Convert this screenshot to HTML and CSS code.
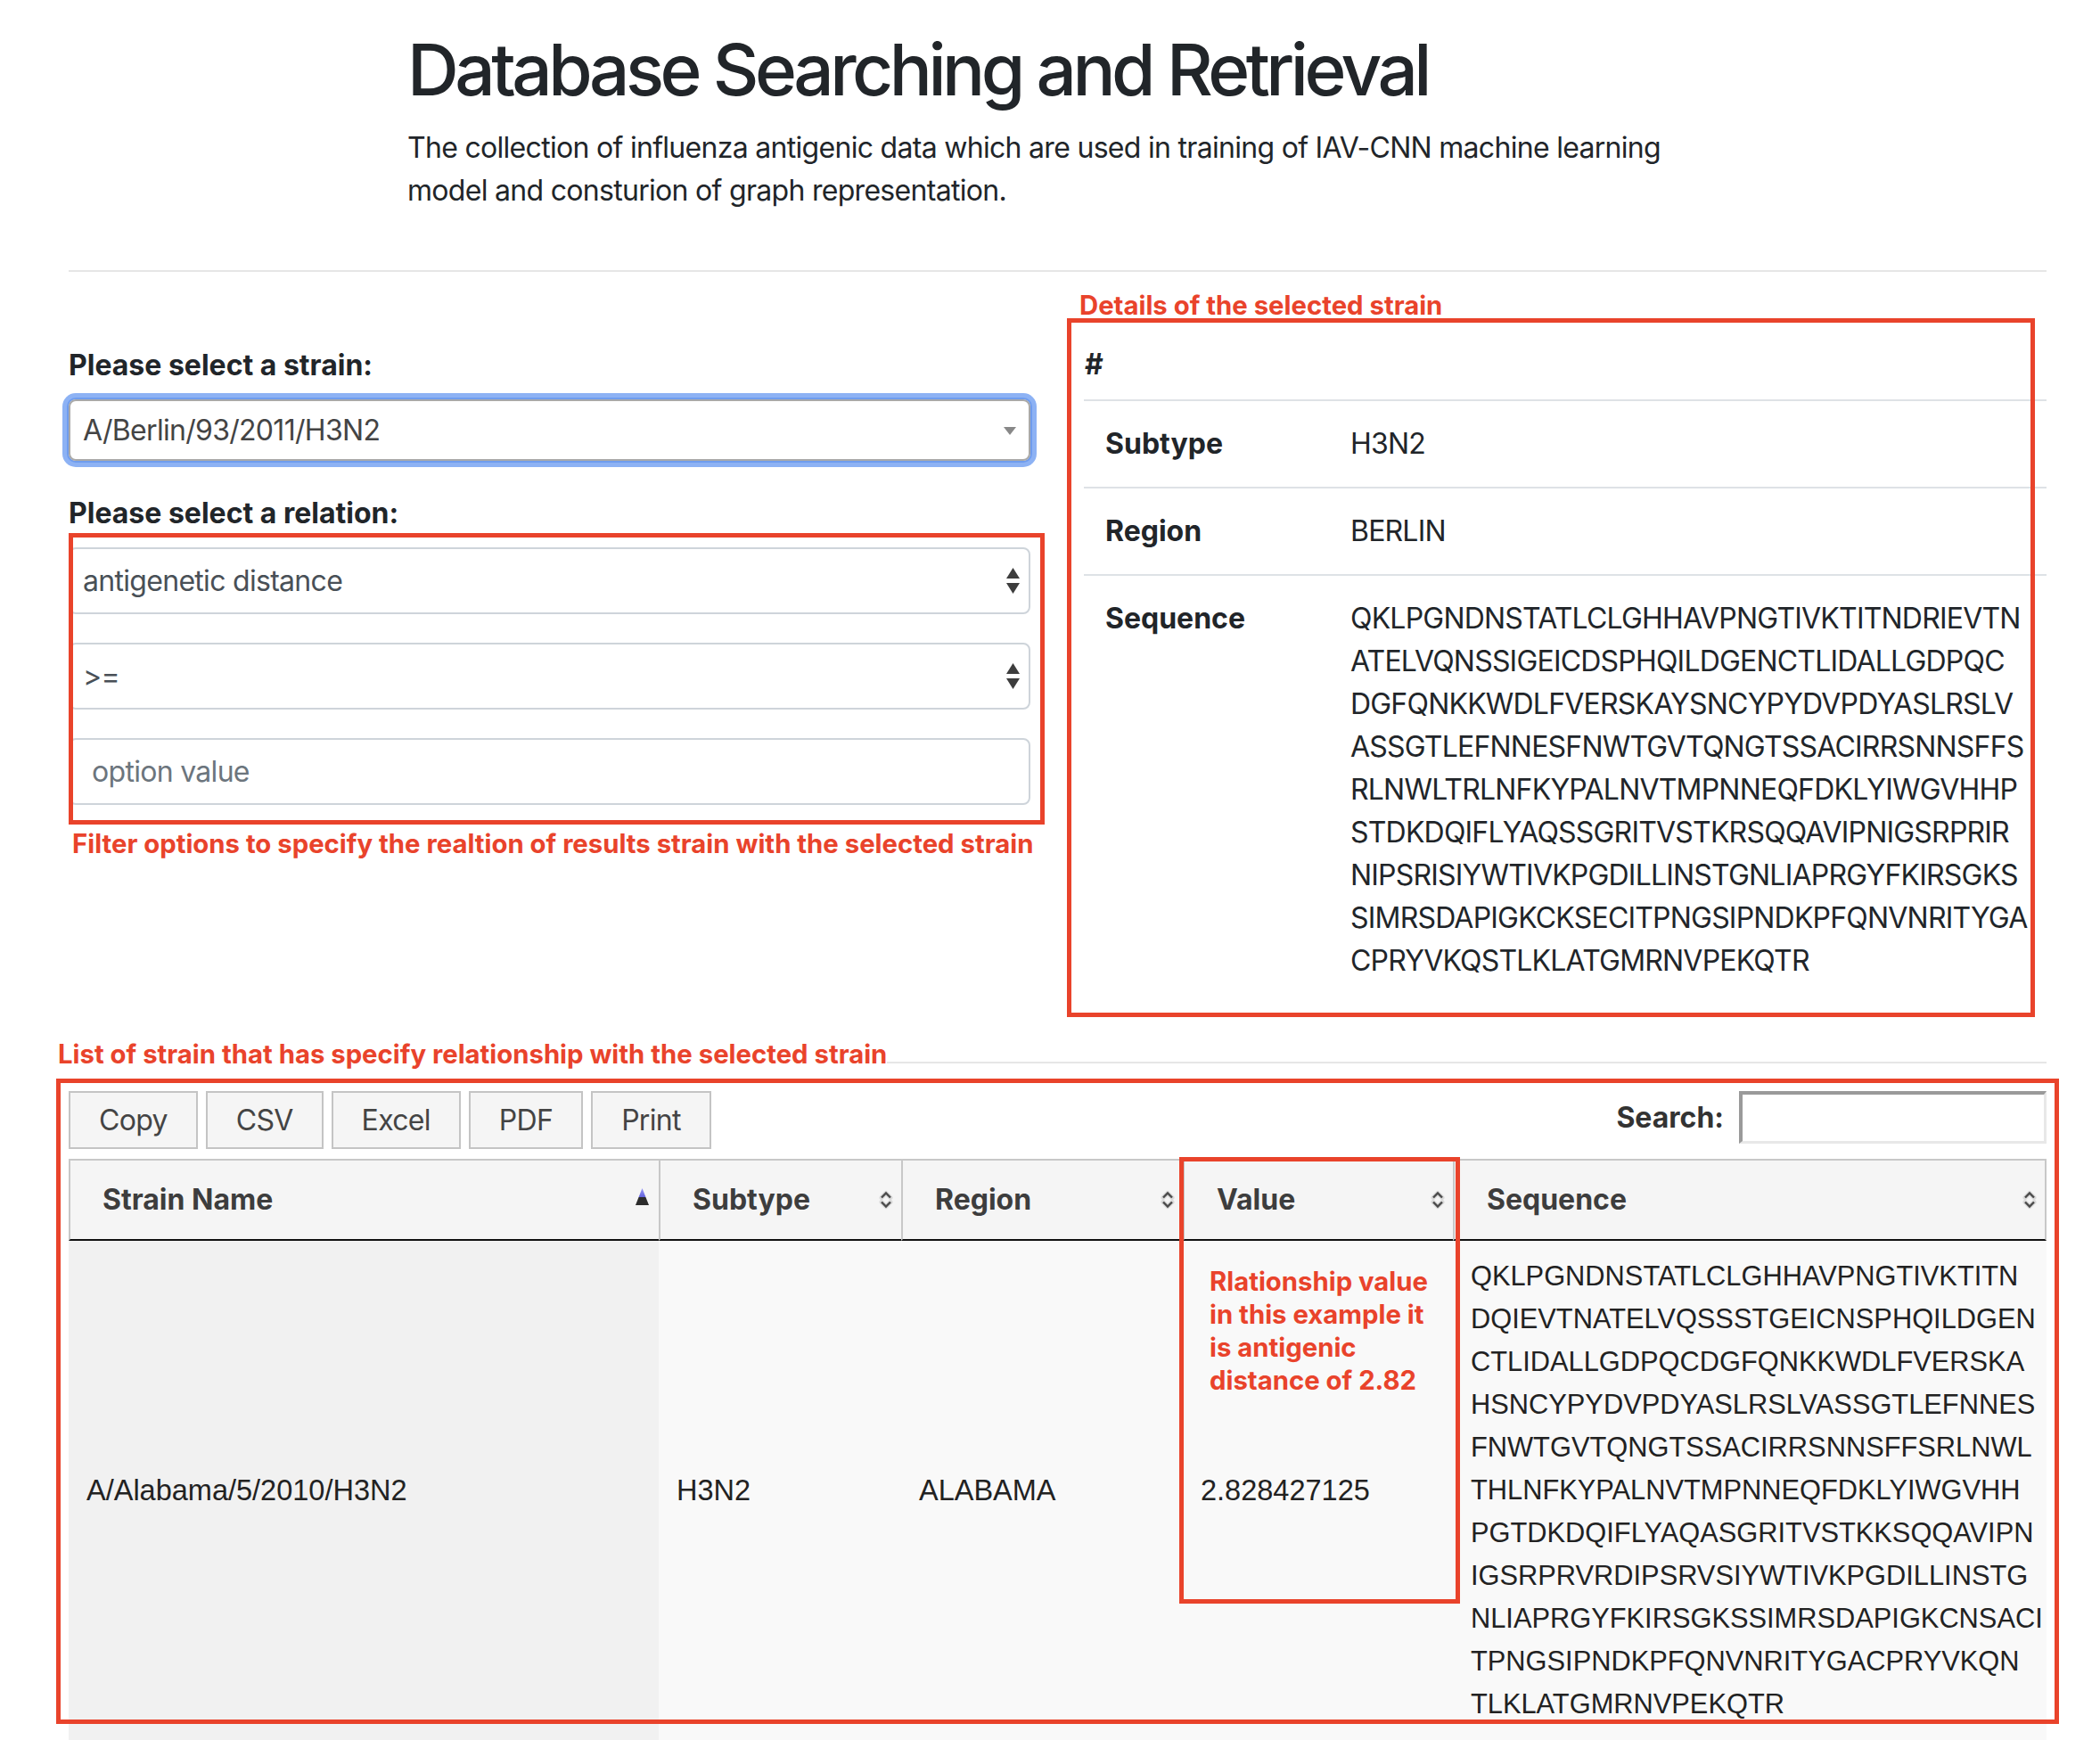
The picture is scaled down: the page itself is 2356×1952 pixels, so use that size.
FILE: index.html
```html
<!DOCTYPE html>
<html lang="en">
<head>
<meta charset="utf-8">
<title>Database Searching and Retrieval</title>
<link rel="stylesheet" href="styles.css">
</head>
<body>
<main class="page">
  <header class="intro">
    <h1 class="intro-title">Database Searching and Retrieval</h1>
    <p class="intro-lead">The collection of influenza antigenic data which are used in training of IAV-CNN machine learning model and consturion of graph representation.</p>
  </header>

  <hr class="rule rule-top">

  <div class="split">
    <section class="query">
      <label class="field-label">Please select a strain:</label>
      <div class="strain-select">
        <span>A/Berlin/93/2011/H3N2</span>
        <span class="strain-arrow"></span>
      </div>

      <label class="field-label">Please select a relation:</label>
      <div class="relation">
        <div class="native-select">
          <span>antigenetic distance</span>
          <svg class="updown" width="15" height="29" viewBox="0 0 15 29"><polygon points="7.5,0 15,12 0,12"/><polygon points="0,17 15,17 7.5,29"/></svg>
        </div>
        <div class="native-select">
          <span>&gt;=</span>
          <svg class="updown" width="15" height="29" viewBox="0 0 15 29"><polygon points="7.5,0 15,12 0,12"/><polygon points="0,17 15,17 7.5,29"/></svg>
        </div>
        <input class="text-input" type="text" placeholder="option value">
        <div class="note-box relation-box"></div>
      </div>
      <p class="note filter-note">Filter options to specify the realtion of results strain with the selected strain</p>
    </section>

    <section class="details">
      <p class="note details-note">Details of the selected strain</p>
      <table class="detail-table">
        <colgroup>
          <col class="detail-key-col">
          <col>
        </colgroup>
        <thead>
          <tr><th class="detail-hash" colspan="2">#</th></tr>
        </thead>
        <tbody>
          <tr><th>Subtype</th><td>H3N2</td></tr>
          <tr><th>Region</th><td>BERLIN</td></tr>
          <tr>
            <th>Sequence</th>
            <td>QKLPGNDNSTATLCLGHHAVPNGTIVKTITNDRIEVTN<br>ATELVQNSSIGEICDSPHQILDGENCTLIDALLGDPQC<br>DGFQNKKWDLFVERSKAYSNCYPYDVPDYASLRSLV<br>ASSGTLEFNNESFNWTGVTQNGTSSACIRRSNNSFFS<br>RLNWLTRLNFKYPALNVTMPNNEQFDKLYIWGVHHP<br>STDKDQIFLYAQSSGRITVSTKRSQQAVIPNIGSRPRIR<br>NIPSRISIYWTIVKPGDILLINSTGNLIAPRGYFKIRSGKS<br>SIMRSDAPIGKCKSECITPNGSIPNDKPFQNVNRITYGA<br>CPRYVKQSTLKLATGMRNVPEKQTR</td>
          </tr>
        </tbody>
      </table>
      <div class="note-box details-box"></div>
    </section>
  </div>

  <div class="results-head">
    <hr class="rule">
    <p class="note results-note">List of strain that has specify relationship with the selected strain</p>
  </div>

  <div class="dt-wrapper">
    <div class="dt-toolbar">
      <div class="dt-buttons">
        <button class="dt-button">Copy</button>
        <button class="dt-button">CSV</button>
        <button class="dt-button">Excel</button>
        <button class="dt-button">PDF</button>
        <button class="dt-button">Print</button>
      </div>
      <label class="dt-search">Search: <input class="dt-search-input" type="search"></label>
    </div>

    <table class="dt">
      <thead>
        <tr>
          <th class="col-name">Strain Name
            <svg class="sort-icon sort-asc" width="17" height="20" viewBox="0 0 17 20"><defs><linearGradient id="ascg" x1="0" y1="0" x2="0" y2="1"><stop offset="0" stop-color="#9a9af8"/><stop offset="0.5" stop-color="#6464dc"/><stop offset="0.52" stop-color="#2c2c2c"/><stop offset="1" stop-color="#2c2c2c"/></linearGradient></defs><polygon points="8.5,0 16,19 1,19" fill="url(#ascg)"/></svg>
          </th>
          <th class="col-subtype">Subtype
            <svg class="sort-icon" width="16" height="24" viewBox="0 0 16 24"><path d="M3 9.5 L8 4.5 L13 9.5 M3 14.5 L8 19.5 L13 14.5" fill="none" stroke="#c8c8c8" stroke-width="5" stroke-linecap="round" stroke-linejoin="round" opacity="0.6"/><path d="M3 9.5 L8 4.5 L13 9.5 M3 14.5 L8 19.5 L13 14.5" fill="none" stroke="#4a4a4a" stroke-width="2.4"/></svg>
          </th>
          <th class="col-region">Region
            <svg class="sort-icon" width="16" height="24" viewBox="0 0 16 24"><path d="M3 9.5 L8 4.5 L13 9.5 M3 14.5 L8 19.5 L13 14.5" fill="none" stroke="#c8c8c8" stroke-width="5" stroke-linecap="round" stroke-linejoin="round" opacity="0.6"/><path d="M3 9.5 L8 4.5 L13 9.5 M3 14.5 L8 19.5 L13 14.5" fill="none" stroke="#4a4a4a" stroke-width="2.4"/></svg>
          </th>
          <th class="col-value">Value
            <svg class="sort-icon" width="16" height="24" viewBox="0 0 16 24"><path d="M3 9.5 L8 4.5 L13 9.5 M3 14.5 L8 19.5 L13 14.5" fill="none" stroke="#c8c8c8" stroke-width="5" stroke-linecap="round" stroke-linejoin="round" opacity="0.6"/><path d="M3 9.5 L8 4.5 L13 9.5 M3 14.5 L8 19.5 L13 14.5" fill="none" stroke="#4a4a4a" stroke-width="2.4"/></svg>
          </th>
          <th class="col-seq">Sequence
            <svg class="sort-icon" width="16" height="24" viewBox="0 0 16 24"><path d="M3 9.5 L8 4.5 L13 9.5 M3 14.5 L8 19.5 L13 14.5" fill="none" stroke="#c8c8c8" stroke-width="5" stroke-linecap="round" stroke-linejoin="round" opacity="0.6"/><path d="M3 9.5 L8 4.5 L13 9.5 M3 14.5 L8 19.5 L13 14.5" fill="none" stroke="#4a4a4a" stroke-width="2.4"/></svg>
          </th>
        </tr>
      </thead>
      <tbody>
        <tr>
          <td class="sorted">A/Alabama/5/2010/H3N2</td>
          <td>H3N2</td>
          <td>ALABAMA</td>
          <td>2.828427125</td>
          <td class="seq-cell">QKLPGNDNSTATLCLGHHAVPNGTIVKTITN<br>DQIEVTNATELVQSSSTGEICNSPHQILDGEN<br>CTLIDALLGDPQCDGFQNKKWDLFVERSKA<br>HSNCYPYDVPDYASLRSLVASSGTLEFNNES<br>FNWTGVTQNGTSSACIRRSNNSFFSRLNWL<br>THLNFKYPALNVTMPNNEQFDKLYIWGVHH<br>PGTDKDQIFLYAQASGRITVSTKKSQQAVIPN<br>IGSRPRVRDIPSRVSIYWTIVKPGDILLINSTG<br>NLIAPRGYFKIRSGKSSIMRSDAPIGKCNSACI<br>TPNGSIPNDKPFQNVNRITYGACPRYVKQN<br>TLKLATGMRNVPEKQTR</td>
        </tr>
      </tbody>
    </table>

    <div class="note-box results-box"></div>
    <div class="note-box value-box"></div>
    <p class="note value-note">Rlationship value<br>in this example it<br>is antigenic<br>distance of 2.82</p>
  </div>
</main>
</body>
</html>
```

FILE: styles.css
```css
* {
  box-sizing: border-box;
}

html {
  overflow: hidden;
}

body {
  margin: 0;
  background: #ffffff;
  color: #212529;
  font-family: Inter, "Noto Sans", sans-serif;
  font-size: 32px;
  line-height: 48px;
  letter-spacing: -0.7px;
}

.page {
  width: 2356px;
  padding: 0 60px 0 77px;
}

/* ---------- intro ---------- */
.intro {
  margin-left: 380px;
  width: 1459px;
  padding-top: 30px;
}

.intro-title {
  margin: 0 0 16px;
  font-size: 80px;
  font-weight: 500;
  line-height: 96px;
  letter-spacing: -4.5px;
}

.intro-lead {
  margin: 0;
  font-size: 32px;
  line-height: 48px;
}

.rule {
  border: 0;
  border-top: 2px solid #e6e6e6;
  margin: 0;
  height: 0;
}

.rule-top {
  margin-top: 65px;
}

/* ---------- annotations ---------- */
.note {
  margin: 0;
  color: #e9432b;
  font-weight: 700;
  font-size: 29.3px;
  line-height: 36px;
  letter-spacing: 0;
  white-space: nowrap;
}

.note-box {
  position: absolute;
  border: 5px solid #e9432b;
  pointer-events: none;
}

/* ---------- split area ---------- */
.split {
  display: grid;
  grid-template-columns: 1079px 1080px;
  column-gap: 60px;
  margin-top: 56px;
}

.query {
  padding-top: 25px;
}

.field-label {
  display: block;
  font-weight: 700;
  letter-spacing: 0;
  margin-bottom: 14px;
}

.strain-select {
  position: relative;
  display: flex;
  align-items: center;
  height: 69px;
  padding-left: 14px;
  margin-bottom: 35px;
  border: 2px solid #a9a9a9;
  border-radius: 8px;
  color: #444444;
  box-shadow: 0 0 0 2px #6f9cee, 0 0 0 7px #8db2f4;
}

.strain-arrow {
  position: absolute;
  right: 14px;
  top: 50%;
  margin-top: -4px;
  width: 0;
  height: 0;
  border-top: 9px solid #888888;
  border-left: 7px solid transparent;
  border-right: 7px solid transparent;
}

.relation {
  position: relative;
  display: flex;
  flex-direction: column;
  gap: 32px;
}

.native-select {
  display: flex;
  align-items: center;
  justify-content: space-between;
  height: 75px;
  padding: 0 10px 0 14px;
  border: 2px solid #ced4da;
  border-radius: 8px;
  color: #495057;
  background: #ffffff;
}

.updown {
  fill: #3d3d3d;
}

.text-input {
  display: block;
  width: 100%;
  height: 75px;
  padding: 0 24px;
  border: 2px solid #ced4da;
  border-radius: 8px;
  font: inherit;
  letter-spacing: -0.7px;
  color: #495057;
  background: #ffffff;
}

.text-input::placeholder {
  color: #6c757d;
}

.relation-box {
  top: -16px;
  left: 0;
  right: -16px;
  height: 327px;
}

.filter-note {
  margin-top: 26px;
  margin-left: 4px;
}

/* ---------- details ---------- */
.details {
  position: relative;
}

.details-note {
  position: absolute;
  left: -5px;
  top: -36px;
}

.details-box {
  top: -4px;
  left: -19px;
  width: 1086px;
  height: 784px;
}

.detail-table {
  width: 100%;
  table-layout: fixed;
  border-collapse: collapse;
}

.detail-key-col {
  width: 275px;
}

.detail-table th,
.detail-table td {
  text-align: left;
  vertical-align: top;
  padding: 24px;
  line-height: 48px;
  white-space: nowrap;
}

.detail-table td {
  letter-spacing: -0.8px;
}

.detail-table th {
  font-weight: 700;
  letter-spacing: 0;
}

.detail-table thead th.detail-hash {
  padding: 24px 0 15px 1px;
}

.detail-table tbody th,
.detail-table tbody td {
  border-top: 2px solid #dee2e6;
}

/* ---------- results ---------- */
.results-head {
  position: relative;
  margin-top: 65px;
}

.results-note {
  position: absolute;
  left: -12px;
  top: -26px;
  background: #ffffff;
}

.dt-wrapper {
  position: relative;
  margin-top: 31px;
}

.dt-toolbar {
  display: flex;
  justify-content: space-between;
  align-items: flex-start;
  height: 65px;
}

.dt-buttons {
  display: flex;
  gap: 9px;
}

.dt-button {
  height: 65px;
  padding: 0 32px;
  border: 2px solid #c4c4c4;
  background: #f5f5f5;
  color: #444444;
  font-family: Inter, "Noto Sans", sans-serif;
  font-size: 32px;
  line-height: 48px;
  letter-spacing: -0.7px;
}

.dt-search {
  display: flex;
  align-items: center;
  gap: 17px;
  font-weight: 700;
  letter-spacing: 0;
  color: #333333;
}

.dt-search-input {
  width: 345px;
  height: 59px;
  border-style: solid;
  border-width: 4px 3px 3px 4px;
  border-color: #9a9a9a #e8e8e8 #e8e8e8 #9a9a9a;
  background: #ffffff;
}

.dt {
  margin-top: 11px;
  width: 2219px;
  table-layout: fixed;
  border-collapse: separate;
  border-spacing: 0;
}

.dt th {
  position: relative;
  text-align: left;
  padding: 20px 36px;
  line-height: 48px;
  font-weight: 700;
  letter-spacing: 0;
  color: #3d3d3d;
  background: #f5f5f5;
  border-top: 2px solid #c8c8c8;
  border-left: 2px solid #c8c8c8;
  border-bottom: 2px solid #111111;
}

.dt th:last-child {
  border-right: 2px solid #c8c8c8;
}

.col-name { width: 662px; }
.col-subtype { width: 272px; }
.col-region { width: 316px; }
.col-value { width: 303px; }
.col-seq { width: 666px; }

.sort-icon {
  position: absolute;
  right: 9px;
  top: 50%;
  transform: translateY(-50%);
}

.sort-asc {
  right: 10px;
  margin-top: -3px;
}

.dt td {
  padding: 16px 20px;
  vertical-align: middle;
  font-family: "Liberation Sans", Arial, sans-serif;
  font-size: 32.5px;
  line-height: 48px;
  letter-spacing: 0;
  color: #222222;
  background: #f9f9f9;
}

.dt td.sorted {
  background: #f1f1f1;
}

.dt td.seq-cell {
  vertical-align: top;
  white-space: nowrap;
  font-size: 30.8px;
}

.results-box {
  top: -14px;
  left: -14px;
  width: 2247px;
  height: 724px;
}

.value-box {
  top: 74px;
  left: 1246px;
  width: 315px;
  height: 501px;
}

.value-note {
  position: absolute;
  left: 1280px;
  top: 195px;
  line-height: 37px;
}
```
